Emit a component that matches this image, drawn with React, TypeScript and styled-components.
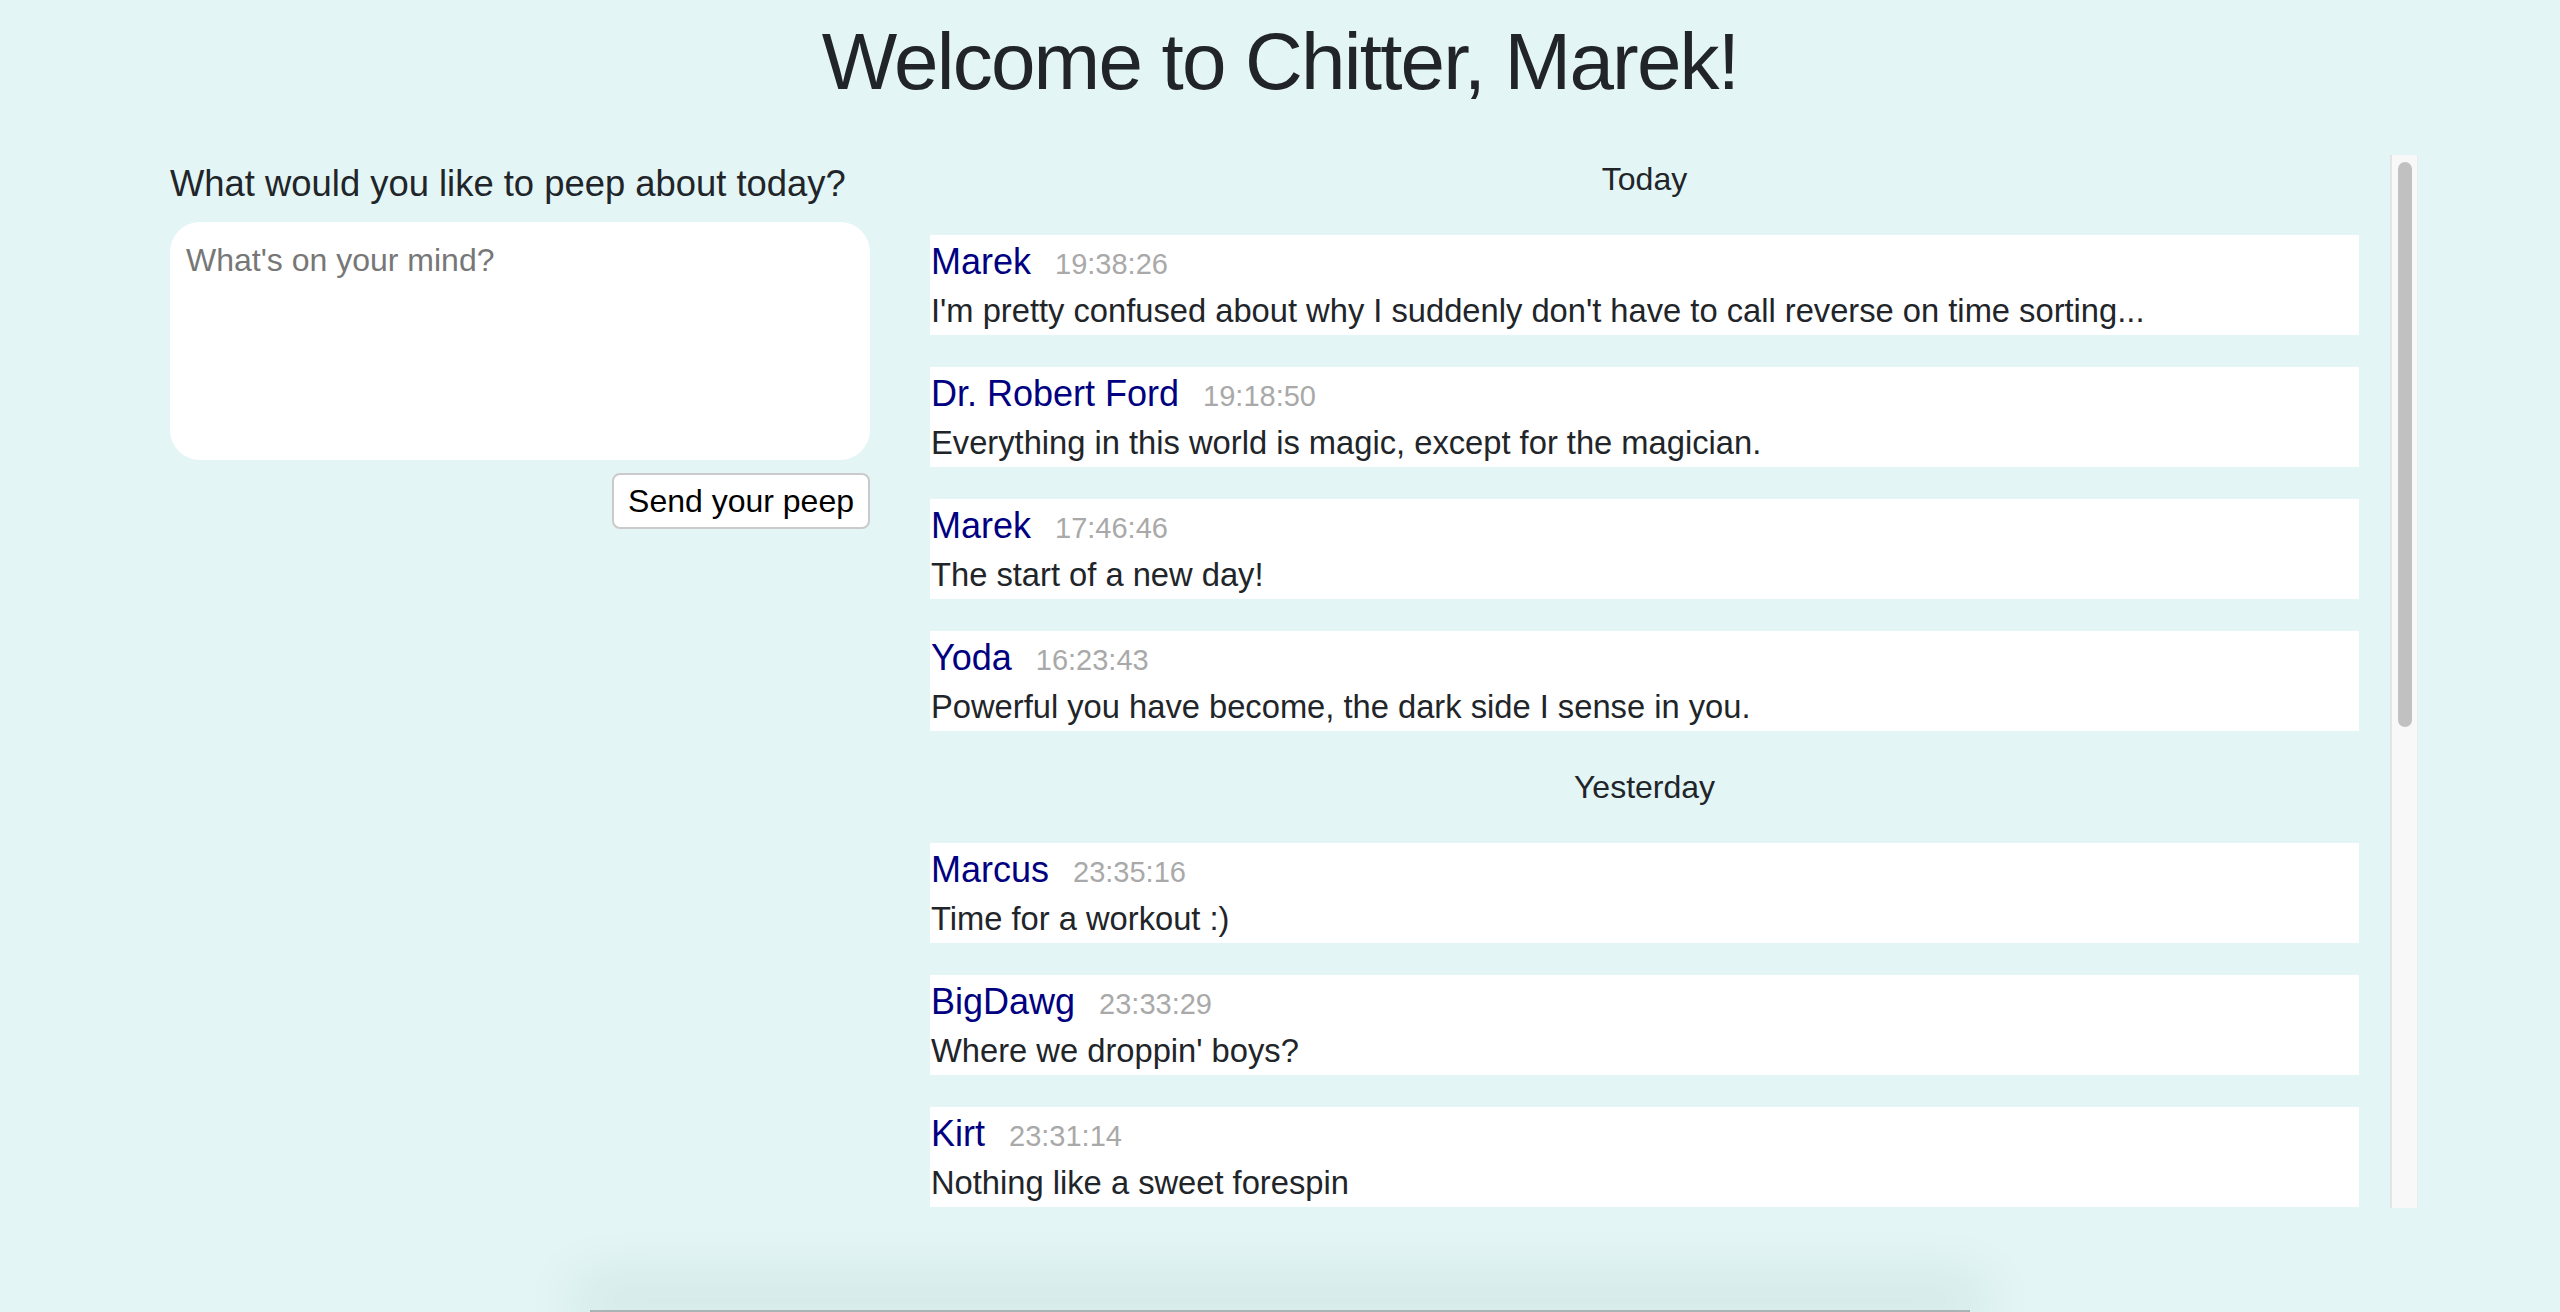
import React from 'react';
import styled, {createGlobalStyle} from 'styled-components';

const COLOR = {
    PAGE: '#e3f5f5',
    TEXT: '#212529',
    NAME: '#000080',
    TIME: '#a9a9a9',
    CARD: '#ffffff',
};

const GlobalStyle = createGlobalStyle`
    html, body {
        margin: 0;
        padding: 0;
        background: ${COLOR.PAGE};
        overflow: hidden;
    }
    body {
        font-family: "Liberation Sans", Arial, sans-serif;
        color: ${COLOR.TEXT};
    }
    * {
        box-sizing: border-box;
    }
`;

const Page = styled.div`
    height: 1312px;
    display: flex;
    flex-direction: column;
`;

const Title = styled.h1`
    margin: 0;
    padding-top: 14px;
    font-size: 80px;
    line-height: 96px;
    font-weight: 400;
    letter-spacing: -1.8px;
    text-align: center;
`;

const Main = styled.div`
    margin: 45px 142px 0 170px;
    display: grid;
    grid-template-columns: 700px 1fr;
    column-gap: 60px;
    align-items: start;
`;

const Composer = styled.form`
    padding-top: 7px;
    display: flex;
    flex-direction: column;
    align-items: flex-end;
`;

const Prompt = styled.h5`
    align-self: stretch;
    margin: 0 0 17px;
    font-size: 36.4px;
    line-height: 43px;
    font-weight: 400;
`;

const PeepInput = styled.textarea`
    align-self: stretch;
    height: 238px;
    margin: 0;
    padding: 14px 16px;
    border: none;
    border-radius: 30px;
    background: ${COLOR.CARD};
    font-family: inherit;
    font-size: 32px;
    line-height: 48px;
    color: ${COLOR.TEXT};
    resize: none;
    outline: none;

    &::placeholder {
        color: #777777;
    }
`;

const SendButton = styled.button`
    margin-top: 13px;
    height: 56px;
    padding: 0 14px;
    border: 2px solid #cacaca;
    border-radius: 8px;
    background: #ffffff;
    font-family: inherit;
    font-size: 32px;
    color: #000000;
`;

const FeedFrame = styled.div`
    display: grid;
    grid-template-columns: 1fr 28px;
    column-gap: 31px;
`;

const Feed = styled.div`
    height: 1053px;
    overflow: hidden;
    display: flex;
    flex-direction: column;
    gap: 32px;
`;

const ScrollTrack = styled.div`
    height: 1053px;
    padding: 7px 5px 0 6px;
    background: #f8f8f8;
    border-left: 2px solid #e4e4e4;
    border-right: 1px solid #ececec;
`;

const ScrollThumb = styled.div`
    height: 565px;
    border-radius: 8px;
    background: #c1c1c1;
`;

const DayLabel = styled.div`
    flex: none;
    font-size: 32px;
    line-height: 48px;
    text-align: center;
`;

const Card = styled.div`
    flex: none;
    height: 100px;
    padding: 2px 2px 0 1px;
    background: ${COLOR.CARD};
`;

const CardHead = styled.div`
    height: 50px;
    font-size: 36px;
    line-height: 50px;
    white-space: nowrap;
`;

const Author = styled.span`
    color: ${COLOR.NAME};
`;

const Time = styled.span`
    margin-left: 24px;
    font-size: 29px;
    line-height: 1;
    color: ${COLOR.TIME};
`;

const Body = styled.div`
    font-size: 32.7px;
    line-height: 48px;
    white-space: nowrap;
`;

const Footer = styled.div`
    margin: auto auto 0;
    width: 1380px;
    height: 2px;
    background: #a9b5b5;
    box-shadow: 0 -10px 60px 14px rgba(0, 60, 60, 0.12);
`;

type Peep = {author: string; time: string; text: string};

const DAYS: {label: string; peeps: Peep[]}[] = [
    {
        label: 'Today',
        peeps: [
            {author: 'Marek', time: '19:38:26', text: "I'm pretty confused about why I suddenly don't have to call reverse on time sorting..."},
            {author: 'Dr. Robert Ford', time: '19:18:50', text: 'Everything in this world is magic, except for the magician.'},
            {author: 'Marek', time: '17:46:46', text: 'The start of a new day!'},
            {author: 'Yoda', time: '16:23:43', text: 'Powerful you have become, the dark side I sense in you.'},
        ],
    },
    {
        label: 'Yesterday',
        peeps: [
            {author: 'Marcus', time: '23:35:16', text: 'Time for a workout :)'},
            {author: 'BigDawg', time: '23:33:29', text: "Where we droppin' boys?"},
            {author: 'Kirt', time: '23:31:14', text: 'Nothing like a sweet forespin'},
        ],
    },
];

function PeepCard({peep}: {peep: Peep}) {
    return (
        <Card>
            <CardHead>
                <Author>{peep.author}</Author>
                <Time>{peep.time}</Time>
            </CardHead>
            <Body>{peep.text}</Body>
        </Card>
    );
}

function App() {
    return (
        <Page>
            <GlobalStyle />
            <Title>Welcome to Chitter, Marek!</Title>
            <Main>
                <Composer onSubmit={(e) => e.preventDefault()}>
                    <Prompt>What would you like to peep about today?</Prompt>
                    <PeepInput placeholder="What's on your mind?" />
                    <SendButton type="submit">Send your peep</SendButton>
                </Composer>
                <FeedFrame>
                    <Feed>
                        {DAYS.map((day) => (
                            <React.Fragment key={day.label}>
                                <DayLabel>{day.label}</DayLabel>
                                {day.peeps.map((peep) => (
                                    <PeepCard key={peep.author + peep.time} peep={peep} />
                                ))}
                            </React.Fragment>
                        ))}
                    </Feed>
                    <ScrollTrack>
                        <ScrollThumb />
                    </ScrollTrack>
                </FeedFrame>
            </Main>
            <Footer />
        </Page>
    );
}

export default App;
